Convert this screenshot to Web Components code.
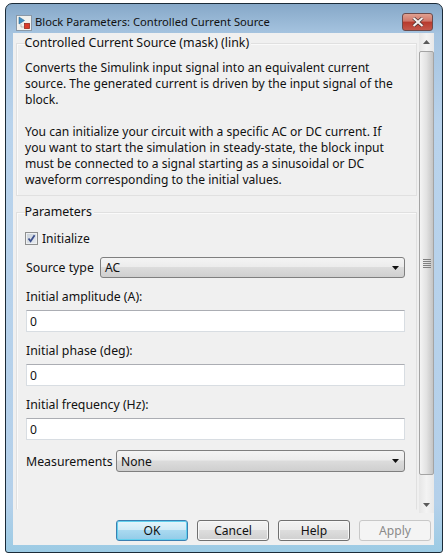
<!DOCTYPE html>
<html>
<head>
<meta charset="utf-8">
<style>
  html, body { margin: 0; padding: 0; background: #fff; }
  body { font: 12.1px "Noto Sans", sans-serif; color: #111; width: 448px; height: 557px; overflow: hidden; }
</style>
</head>
<body>
<dialog-window title="Block Parameters: Controlled Current Source">
  <group-box label="Controlled Current Source (mask) (link)">
    <p-text>Converts the Simulink input signal into an equivalent current<br>source. The generated current is driven by the input signal of the<br>block.</p-text>
    <p-text spaced>You can initialize your circuit with a specific AC or DC current. If<br>you want to start the simulation in steady-state, the block input<br>must be connected to a signal starting as a sinusoidal or DC<br>waveform corresponding to the initial values.</p-text>
  </group-box>
  <group-box class="params" label="Parameters">
    <check-field>Initialize</check-field>
    <select-field label="Source type" value="AC" style="--label-width: 74px"></select-field>
    <text-field label="Initial amplitude (A):" value="0"></text-field>
    <text-field label="Initial phase (deg):" value="0"></text-field>
    <text-field class="before-last" label="Initial frequency (Hz):" value="0"></text-field>
    <select-field label="Measurements" value="None" class="last" style="--label-width: 90px"></select-field>
  </group-box>
  <push-button slot="buttons" focused>OK</push-button>
  <push-button slot="buttons">Cancel</push-button>
  <push-button slot="buttons">Help</push-button>
  <push-button slot="buttons" disabled>Apply</push-button>
</dialog-window>

<script>
const font = '"Noto Sans", sans-serif';

class DialogWindow extends HTMLElement {
  constructor() {
    super();
    const root = this.attachShadow({ mode: 'open' });
    root.innerHTML = `
      <style>
        :host {
          display: flex;
          flex-direction: column;
          box-sizing: border-box;
          width: 438px;
          height: 550px;
          margin: 3px 0 0 5px;
          padding: 0 8px 7px 7px;
          border: 1px solid #1b2b38;
          border-radius: 7px 7px 3px 3px;
          background: linear-gradient(#86a8c8 0, #a6c4e0 30px, #b9d3ec 120px, #b4d0ea 500px, #9ccbe4 100%);
          font: 12.1px ${font};
        }
        .title {
          display: flex;
          align-items: flex-start;
          box-sizing: border-box;
          height: 29px;
          flex: none;
          padding: 9px 1px 0 3px;
          color: #111;
        }
        .title svg { flex: none; }
        .title > svg { margin: 2px 3px 0 0; }
        .title span { flex: 1; white-space: nowrap; font-size: 11.2px; line-height: 18px; }
        .close {
          display: flex;
          align-items: center;
          justify-content: center;
          box-sizing: border-box;
          width: 31px;
          height: 18px;
          border: 1px solid #6d4a4a;
          border-radius: 3px;
          background: linear-gradient(#e0a090 0, #d0776a 45%, #b8392c 50%, #c4574a 100%);
        }
        .body {
          flex: 1;
          display: flex;
          flex-direction: column;
          background: #f0f0f0;
          min-height: 0;
        }
        .main { display: flex; height: 480px; flex: none; }
        .panes { flex: 1; padding: 2px 2px 0 3px; min-width: 0; }
        .buttons {
          display: flex;
          gap: 9px;
          justify-content: flex-end;
          padding: 7px 3px 0 0;
        }
      </style>
      <div class="title">
        <svg width="16" height="16" viewBox="0 0 16 16">
          <rect x="0.5" y="0.5" width="15" height="15" fill="#f1f1ee" stroke="#8a98a6"/>
          <path d="M3 2 L8.5 5.5 L3 9 Z" fill="#3f8cc0" stroke="#2a6d9c" stroke-width="0.6"/>
          <path d="M5 9.5 V12 H8" fill="none" stroke="#8a8a8a" stroke-dasharray="1 1"/>
          <rect x="8.5" y="8.5" width="5" height="5" fill="#dc3b2a" stroke="#9a2a1c" stroke-width="0.8"/>
        </svg>
        <span></span>
        <div class="close">
          <svg width="14" height="10" viewBox="0 0 14 10">
            <path d="M2.5 1 L11.5 9 M11.5 1 L2.5 9" stroke="#3f2a2a" stroke-width="3.4"/>
            <path d="M2.5 1 L11.5 9 M11.5 1 L2.5 9" stroke="#f6f0ee" stroke-width="2.2"/>
          </svg>
        </div>
      </div>
      <div class="body">
        <div class="main">
          <div class="panes"><slot></slot></div>
          <scroll-bar></scroll-bar>
        </div>
        <div class="buttons"><slot name="buttons"></slot></div>
      </div>`;
    root.querySelector('.title span').textContent = this.getAttribute('title');
  }
}

class ScrollBar extends HTMLElement {
  constructor() {
    super();
    this.attachShadow({ mode: 'open' }).innerHTML = `
      <style>
        :host {
          display: flex;
          flex-direction: column;
          align-items: stretch;
          flex: none;
          width: 15px;
          background: linear-gradient(90deg, #e6e6e6, #f3f3f3 50%, #e8e8e8);
        }
        .arrow { height: 17px; flex: none; display: flex; align-items: center; justify-content: center; }
        .track { flex: 1; display: flex; padding: 0; }
        .thumb {
          flex: 1;
          display: flex;
          align-items: center;
          justify-content: center;
          box-sizing: border-box;
          margin: 1px 0 21px 0;
          border: 1px solid #a4a4a4;
          border-radius: 2px;
          background: linear-gradient(90deg, #f4f4f4, #e2e2e2 50%, #c4c4c4);
        }
      </style>
      <div class="arrow"><svg width="7" height="4"><path d="M3.5 0 L7 4 H0 Z" fill="#5a5a5a"/></svg></div>
      <div class="track">
        <div class="thumb">
          <svg width="8" height="9"><path d="M0 .5H8M0 2.5H8M0 4.5H8M0 6.5H8M0 8.5H8" stroke="#808080"/></svg>
        </div>
      </div>
      <div class="arrow"><svg width="7" height="4"><path d="M3.5 4 L7 0 H0 Z" fill="#5a5a5a"/></svg></div>`;
  }
}

class GroupBox extends HTMLElement {
  constructor() {
    super();
    const root = this.attachShadow({ mode: 'open' });
    root.innerHTML = `
      <style>
        :host { display: block; margin-bottom: 8px; }
        :host(.params) { margin-bottom: 0; }
        fieldset {
          margin: 0;
          padding: 9px 0 7px 8px;
          border: 1px solid #e0e0e0;
          box-shadow: inset 1px 1px 0 #fafafa;
        }
        :host(.params) fieldset {
          box-sizing: border-box;
          height: 306px;
          padding-top: 10px;
          padding-bottom: 0;
          border-bottom-color: #f0f0f0;
        }
        legend {
          padding: 0 2px 0 0;
          margin-left: -0.5px;
          line-height: 16px;
          font-size: 12.4px;
          background: #f0f0f0;
        }
      </style>
      <fieldset><legend></legend><slot></slot></fieldset>`;
    root.querySelector('legend').textContent = this.getAttribute('label');
  }
}

class PText extends HTMLElement {
  constructor() {
    super();
    this.attachShadow({ mode: 'open' }).innerHTML = `
      <style>
        :host { display: block; line-height: 16px; white-space: nowrap; }
        :host([spaced]) { margin-top: 16px; }
      </style>
      <slot></slot>`;
  }
}

class CheckField extends HTMLElement {
  constructor() {
    super();
    this.attachShadow({ mode: 'open' }).innerHTML = `
      <style>
        :host { display: flex; align-items: center; gap: 4px; height: 16px; margin-bottom: 11px; }
        .box {
          box-sizing: border-box;
          width: 13px;
          height: 13px;
          border: 1px solid #8e8f8f;
          background: linear-gradient(135deg, #c9d0d8, #e9edf2);
          box-shadow: inset 0 0 0 1px #eef0f2;
          display: flex;
        }
      </style>
      <div class="box">
        <svg width="11" height="11" viewBox="0 0 11 11"><path d="M2.5 5.5 L4.6 8.2 L8.6 2.2" fill="none" stroke="#3c4f8c" stroke-width="1.8"/></svg>
      </div>
      <slot></slot>`;
  }
}

class SelectField extends HTMLElement {
  constructor() {
    super();
    const root = this.attachShadow({ mode: 'open' });
    root.innerHTML = `
      <style>
        :host { display: flex; align-items: center; height: 21px; margin-bottom: 11px; padding: 0 11px 0 1px; }
        :host(.last) { height: 22px; margin-bottom: 0; }
        label { flex: none; width: var(--label-width); font-size: 12.3px; white-space: nowrap; }
        .combo {
          flex: 1;
          display: flex;
          align-items: center;
          box-sizing: border-box;
          height: 100%;
          padding: 0 5px 0 4px;
          border: 1px solid #7f7f7f;
          border-radius: 3px;
          background: linear-gradient(#f4f4f4 0, #ececec 45%, #dcdcdc 50%, #cfcfcf 100%);
        }
        .combo span { flex: 1; }
      </style>
      <label></label>
      <div class="combo"><span></span>
        <svg width="7" height="4"><path d="M0 0 H7 L3.5 4 Z" fill="#111"/></svg>
      </div>`;
    root.querySelector('label').textContent = this.getAttribute('label');
    root.querySelector('.combo span').textContent = this.getAttribute('value');
  }
}

class TextField extends HTMLElement {
  constructor() {
    super();
    const root = this.attachShadow({ mode: 'open' });
    root.innerHTML = `
      <style>
        :host { display: block; padding: 0 11px 0 1px; margin-bottom: 11px; }
        :host(.before-last) { margin-bottom: 10px; }
        label { display: block; line-height: 16px; margin-bottom: 5px; font-size: 12.3px; }
        .input {
          box-sizing: border-box;
          height: 22px;
          padding: 1px 0 0 3px;
          line-height: 20px;
          background: #fff;
          border: 1px solid #d8dde2;
          border-top-color: #abadb3;
        }
      </style>
      <label></label>
      <div class="input"></div>`;
    root.querySelector('label').textContent = this.getAttribute('label');
    root.querySelector('.input').textContent = this.getAttribute('value');
  }
}

class PushButton extends HTMLElement {
  constructor() {
    super();
    this.attachShadow({ mode: 'open' }).innerHTML = `
      <style>
        :host {
          display: flex;
          align-items: center;
          justify-content: center;
          box-sizing: border-box;
          width: 72px;
          height: 21px;
          border: 1px solid #707070;
          border-radius: 3px;
          background: linear-gradient(#f3f3f3 0, #ebebeb 48%, #dddddd 50%, #cfcfcf 100%);
          box-shadow: inset 0 0 0 1px #f8f8f8;
          color: #111;
        }
        :host([focused]) {
          border-color: #3c7fb1;
          background: linear-gradient(#e5f5fb 0, #cfeaf7 48%, #a9d9f0 50%, #92cbe8 100%);
          box-shadow: inset 0 0 0 1px #62d0ee;
        }
        :host([disabled]) {
          border-color: #c8c8c8;
          background: #f4f4f4;
          box-shadow: none;
          color: #8a8a8a;
        }
      </style>
      <slot></slot>`;
  }
}

customElements.define('dialog-window', DialogWindow);
customElements.define('scroll-bar', ScrollBar);
customElements.define('group-box', GroupBox);
customElements.define('p-text', PText);
customElements.define('check-field', CheckField);
customElements.define('select-field', SelectField);
customElements.define('text-field', TextField);
customElements.define('push-button', PushButton);
</script>
</body>
</html>
